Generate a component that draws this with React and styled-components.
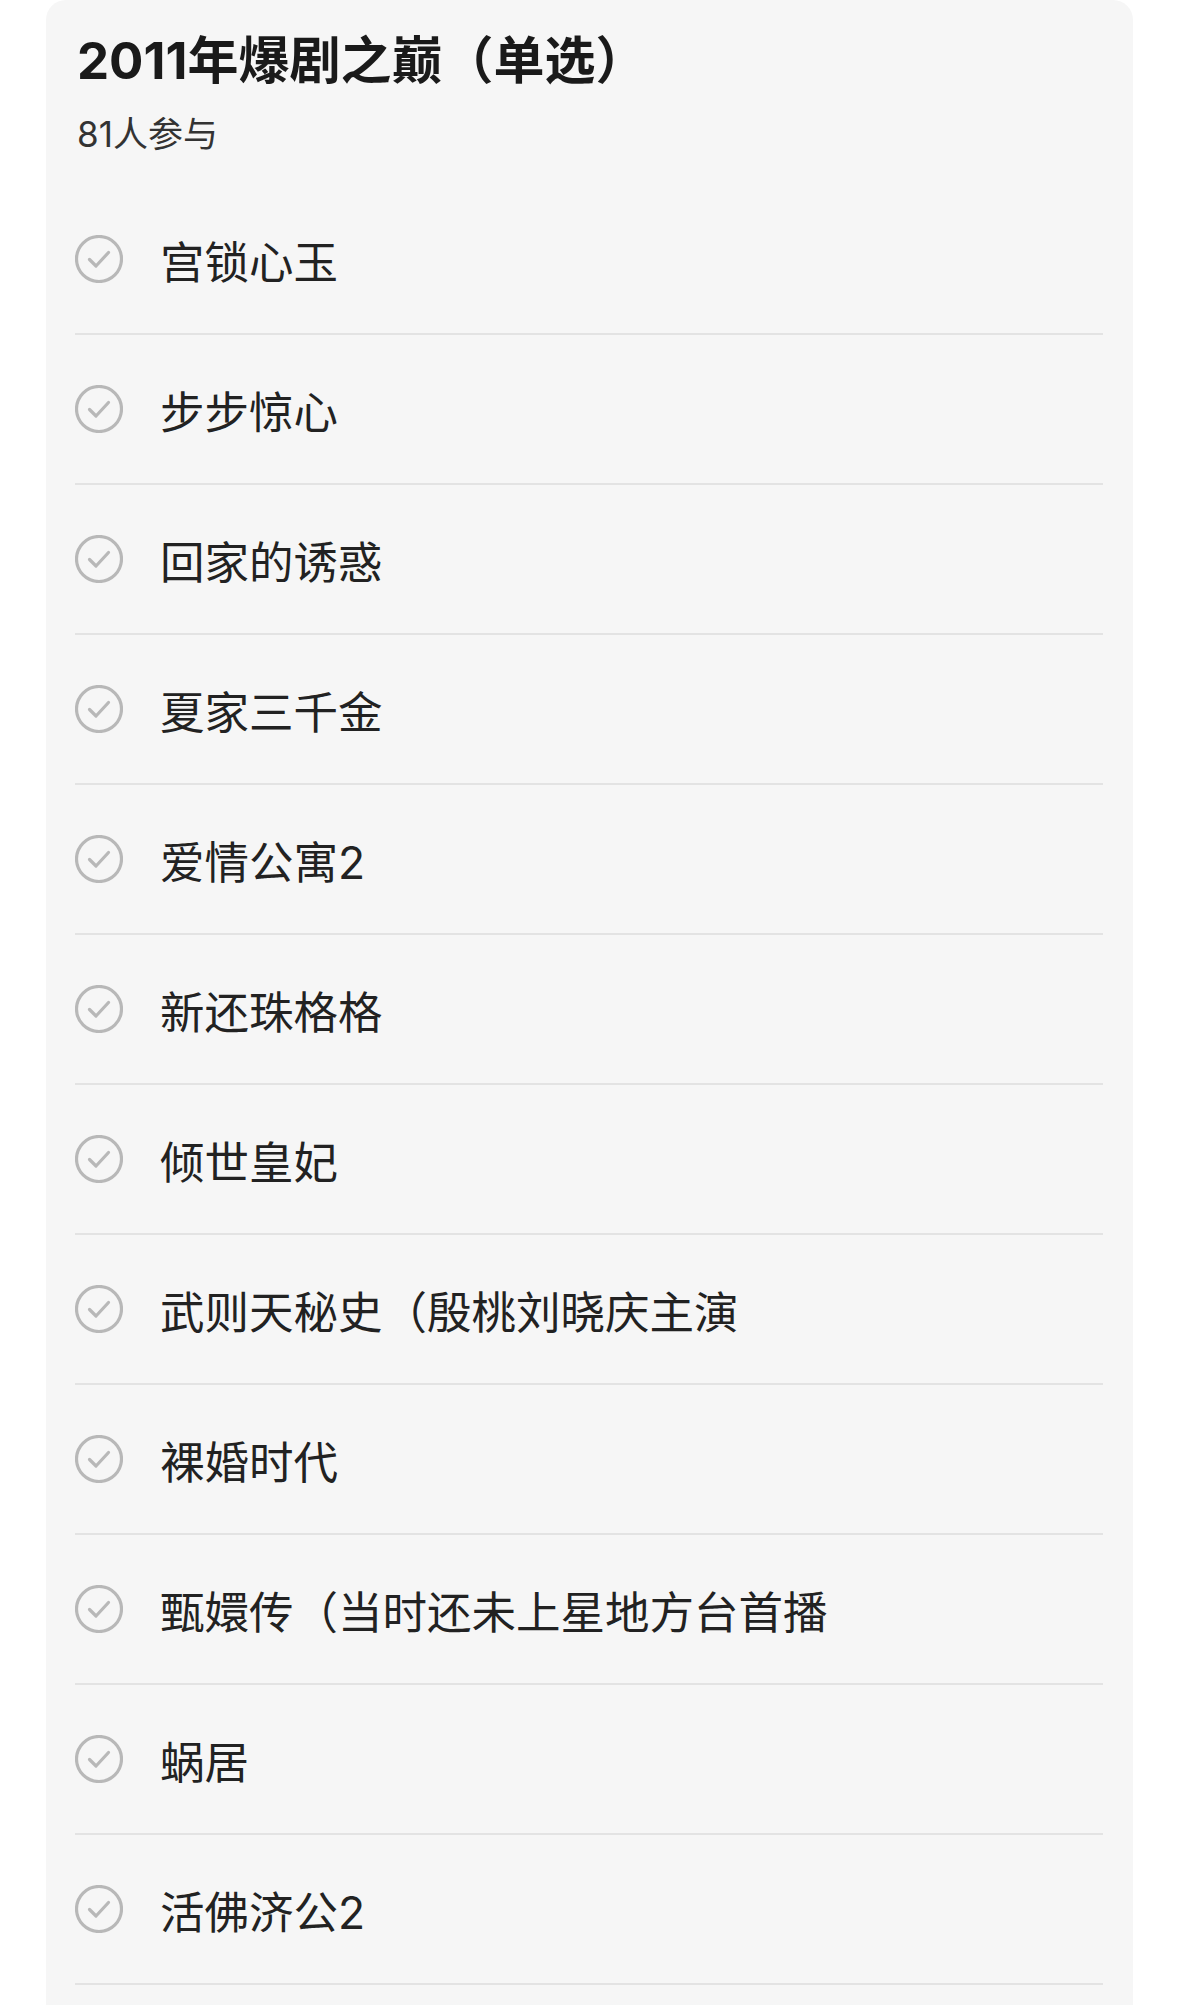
import React from "react";
import styled, { createGlobalStyle } from "styled-components";

const GlobalStyle = createGlobalStyle`
    body {
        margin: 0;
        background: #ffffff;
        font-family: Inter, "Noto Sans CJK SC", sans-serif;
    }
`;

const Card = styled.section`
    margin-left: 46px;
    width: 1087px;
    min-height: 2005px;
    box-sizing: border-box;
    padding: 29px 30px 0 29px;
    background: #f6f6f6;
    border-radius: 20px 20px 0 0;
`;

const Title = styled.h1`
    margin: 0;
    padding-left: 2px;
    font-size: 51px;
    line-height: 64px;
    font-weight: 700;
    color: #1a1a1a;
`;

const Count = styled.p`
    margin: 18px 0 0 0;
    padding-left: 2px;
    font-size: 35px;
    line-height: 46px;
    color: #333333;
`;

const List = styled.ul`
    list-style: none;
    margin: 28px 0 0 0;
    padding: 0;
`;

const Option = styled.li`
    display: flex;
    align-items: center;
    gap: 37px;
    height: 148px;
    border-bottom: 2px solid #e3e3e3;
    font-size: 44.5px;
    color: #222222;
`;

const Check = styled.svg`
    flex: none;
    width: 48px;
    height: 48px;
`;

const options = [
    "宫锁心玉",
    "步步惊心",
    "回家的诱惑",
    "夏家三千金",
    "爱情公寓2",
    "新还珠格格",
    "倾世皇妃",
    "武则天秘史（殷桃刘晓庆主演",
    "裸婚时代",
    "甄嬛传（当时还未上星地方台首播",
    "蜗居",
    "活佛济公2",
];

const CheckIcon = () => (
    <Check viewBox="0 0 48 48">
        <circle cx="24" cy="24" r="22.5" fill="none" stroke="#b8b8b8" strokeWidth="3.2" />
        <path
            d="M14.5 24.5 L21 31 L33.5 17.5"
            fill="none"
            stroke="#b8b8b8"
            strokeWidth="3.2"
            strokeLinecap="round"
            strokeLinejoin="round"
        />
    </Check>
);

const App = () => {
    return (
        <>
            <GlobalStyle />
            <Card>
                <Title>2011年爆剧之巅（单选）</Title>
                <Count>81人参与</Count>
                <List>
                    {options.map((item) => (
                        <Option key={item}>
                            <CheckIcon />
                            <span>{item}</span>
                        </Option>
                    ))}
                </List>
            </Card>
        </>
    );
};

export default App;
